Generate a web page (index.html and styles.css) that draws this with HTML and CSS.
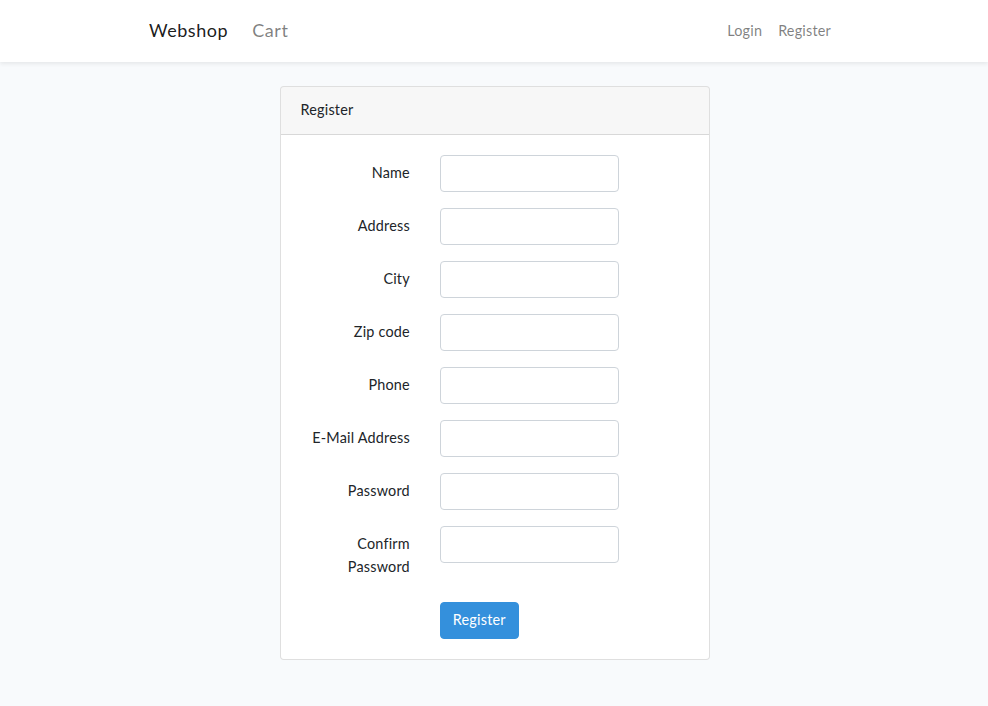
FILE: index.html
```html
<!DOCTYPE html>
<html lang="en">
<head>
<meta charset="utf-8">
<title>Webshop - Register</title>
<link rel="stylesheet" href="styles.css">
</head>
<body>
<nav class="navbar">
  <div class="container nav-inner">
    <div class="nav-left">
      <a class="brand" href="#">Webshop</a>
      <a class="nav-link big" href="#">Cart</a>
    </div>
    <div class="nav-right">
      <a class="nav-link" href="#">Login</a>
      <a class="nav-link" href="#">Register</a>
    </div>
  </div>
</nav>
<main class="main">
  <div class="card">
    <div class="card-header">Register</div>
    <form class="card-body">
      <div class="form-row">
        <label class="form-label" for="name">Name</label>
        <div class="form-field"><input class="form-control" id="name" type="text"></div>
      </div>
      <div class="form-row">
        <label class="form-label" for="address">Address</label>
        <div class="form-field"><input class="form-control" id="address" type="text"></div>
      </div>
      <div class="form-row">
        <label class="form-label" for="city">City</label>
        <div class="form-field"><input class="form-control" id="city" type="text"></div>
      </div>
      <div class="form-row">
        <label class="form-label" for="zip">Zip code</label>
        <div class="form-field"><input class="form-control" id="zip" type="text"></div>
      </div>
      <div class="form-row">
        <label class="form-label" for="phone">Phone</label>
        <div class="form-field"><input class="form-control" id="phone" type="text"></div>
      </div>
      <div class="form-row">
        <label class="form-label" for="email">E-Mail Address</label>
        <div class="form-field"><input class="form-control" id="email" type="email"></div>
      </div>
      <div class="form-row">
        <label class="form-label" for="password">Password</label>
        <div class="form-field"><input class="form-control" id="password" type="password"></div>
      </div>
      <div class="form-row">
        <label class="form-label" for="confirm">Confirm Password</label>
        <div class="form-field"><input class="form-control" id="confirm" type="password"></div>
      </div>
      <div class="form-row last">
        <div class="form-label"></div>
        <div class="form-field"><button class="btn-primary" type="button">Register</button></div>
      </div>
    </form>
  </div>
</main>
</body>
</html>
```
FILE: styles.css
```css
* { box-sizing: border-box; }
html, body { margin: 0; padding: 0; }
body {
  background: #f8fafc;
  font-family: Lato, "Open Sans", "Noto Sans", sans-serif;
  font-size: 14.4px;
  line-height: 1.6;
  letter-spacing: 0.2px;
  color: #212529;
}
a { text-decoration: none; }

.navbar {
  background: #fff;
  height: 62px;
  box-shadow: 0 2px 4px rgba(0,0,0,0.075);
  display: flex;
  align-items: center;
}
.container {
  width: 720px;
  margin: 0 auto;
  padding: 0 15px;
}
.nav-inner {
  display: flex;
  justify-content: space-between;
  align-items: center;
}
.nav-left, .nav-right { display: flex; align-items: center; }
.brand {
  font-size: 18px;
  letter-spacing: 0.55px;
  color: rgba(0,0,0,0.9);
  margin-right: 16px;
  line-height: 28px;
  padding-bottom: 2px;
}
.nav-link {
  color: rgba(0,0,0,0.5);
  padding: 8px;
}
.nav-link.big {
  font-size: 18px;
  letter-spacing: 0.55px;
  line-height: 28px;
  padding: 0 8px 2px;
}

.main {
  padding: 24px 0;
  display: flex;
  justify-content: center;
}
.card {
  width: 430px;
  margin-left: 1px;
  background: #fff;
  border: 1px solid rgba(0,0,0,0.125);
  border-radius: 4px;
}
.card-header {
  padding: 11px 20px 13px;
  background: rgba(0,0,0,0.03);
  border-bottom: 1px solid rgba(0,0,0,0.125);
  border-radius: 3px 3px 0 0;
}
.card-body {
  padding: 20px 20px;
  margin: 0;
}
.form-row {
  display: flex;
  margin: 0 -15px 16px;
}
.form-row.last { margin-bottom: 0; }
.form-label {
  width: 139.33px;
  padding: 6px 15px 8px;
  text-align: right;
  flex-shrink: 0;
}
.form-field {
  width: 209px;
  padding: 0 15px;
}
.form-control {
  display: block;
  width: 100%;
  height: 37px;
  padding: 6px 12px;
  font: inherit;
  color: #495057;
  background: #fff;
  border: 1px solid #ced4da;
  border-radius: 4px;
}
.btn-primary {
  font: inherit;
  letter-spacing: 0.2px;
  color: #fff;
  background: #3490dc;
  border: 1px solid #3490dc;
  border-radius: 4px;
  padding: 5px 12px 7px;
  height: 37px;
  line-height: 23px;
}
```
